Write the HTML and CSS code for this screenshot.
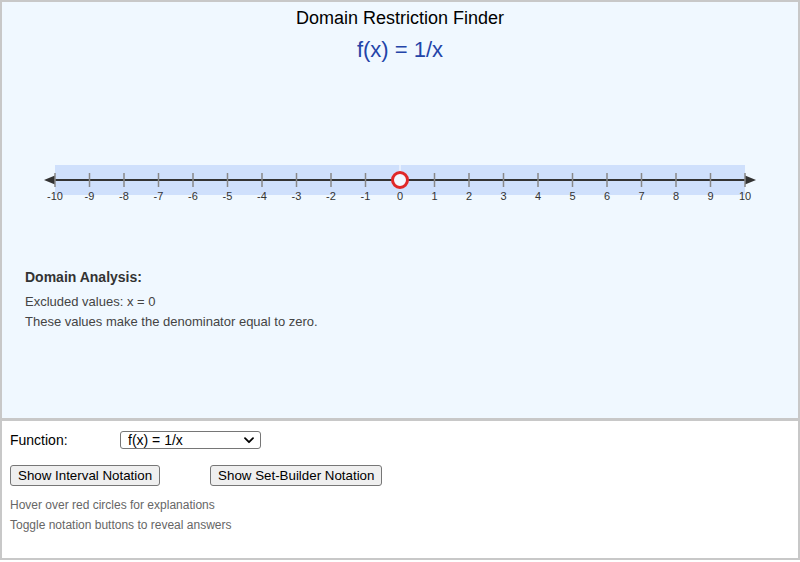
FILE: index.html
```html
<!DOCTYPE html>
<html>
<head>
<meta charset="utf-8">
<link rel="stylesheet" href="styles.css">
</head>
<body>
<div class="app">
  <div class="viz">
    <div class="title">Domain Restriction Finder</div>
    <div class="func">f(x) = 1/x</div>
    <svg class="line" width="796" height="140" viewBox="2 80 796 140">
      <rect x="55" y="165" width="345" height="30" fill="#cfe0fc"/>
      <rect x="400" y="165" width="345" height="30" fill="#cfe0fc"/>
      <line x1="400" y1="165" x2="400" y2="173" stroke="#ffffff" stroke-width="1"/>
      <line x1="50" y1="180" x2="750" y2="180" stroke="#333" stroke-width="2"/>
      <polygon points="44,180 55,175.5 55,184.5" fill="#333"/>
      <polygon points="756,180 745,175.5 745,184.5" fill="#333"/>
      <g stroke="#888" stroke-width="1.5">
        <line x1="55" y1="173" x2="55" y2="187"/>
        <line x1="89.5" y1="173" x2="89.5" y2="187"/>
        <line x1="124" y1="173" x2="124" y2="187"/>
        <line x1="158.5" y1="173" x2="158.5" y2="187"/>
        <line x1="193" y1="173" x2="193" y2="187"/>
        <line x1="227.5" y1="173" x2="227.5" y2="187"/>
        <line x1="262" y1="173" x2="262" y2="187"/>
        <line x1="296.5" y1="173" x2="296.5" y2="187"/>
        <line x1="331" y1="173" x2="331" y2="187"/>
        <line x1="365.5" y1="173" x2="365.5" y2="187"/>
        <line x1="434.5" y1="173" x2="434.5" y2="187"/>
        <line x1="469" y1="173" x2="469" y2="187"/>
        <line x1="503.5" y1="173" x2="503.5" y2="187"/>
        <line x1="538" y1="173" x2="538" y2="187"/>
        <line x1="572.5" y1="173" x2="572.5" y2="187"/>
        <line x1="607" y1="173" x2="607" y2="187"/>
        <line x1="641.5" y1="173" x2="641.5" y2="187"/>
        <line x1="676" y1="173" x2="676" y2="187"/>
        <line x1="710.5" y1="173" x2="710.5" y2="187"/>
        <line x1="745" y1="173" x2="745" y2="187"/>
      </g>
      <g class="lbl" text-anchor="middle" fill="#333333">
        <text x="55" y="200">-10</text>
        <text x="89.5" y="200">-9</text>
        <text x="124" y="200">-8</text>
        <text x="158.5" y="200">-7</text>
        <text x="193" y="200">-6</text>
        <text x="227.5" y="200">-5</text>
        <text x="262" y="200">-4</text>
        <text x="296.5" y="200">-3</text>
        <text x="331" y="200">-2</text>
        <text x="365.5" y="200">-1</text>
        <text x="400" y="200">0</text>
        <text x="434.5" y="200">1</text>
        <text x="469" y="200">2</text>
        <text x="503.5" y="200">3</text>
        <text x="538" y="200">4</text>
        <text x="572.5" y="200">5</text>
        <text x="607" y="200">6</text>
        <text x="641.5" y="200">7</text>
        <text x="676" y="200">8</text>
        <text x="710.5" y="200">9</text>
        <text x="745" y="200">10</text>
      </g>
      <circle cx="400" cy="180" r="7.5" fill="#f4f9ff" stroke="#e02828" stroke-width="3"/>
    </svg>
    <div class="analysis">
      <div class="a-head">Domain Analysis:</div>
      <div class="a-line">Excluded values: x = 0</div>
      <div class="a-line">These values make the denominator equal to zero.</div>
    </div>
  </div>
  <div class="controls">
    <div class="row">
      <span class="label">Function:</span>
      <span class="sel-wrap">
        <select class="sel">
          <option>f(x) = 1/x</option>
        </select>
        <svg class="chev" width="10" height="7" viewBox="0 0 10 7"><path d="M1 1.2 L5 5.2 L9 1.2" fill="none" stroke="#000" stroke-width="1.8" stroke-linecap="round" stroke-linejoin="round"/></svg>
      </span>
    </div>
    <div class="btns">
      <button class="btn">Show Interval Notation</button>
      <button class="btn">Show Set-Builder Notation</button>
    </div>
    <div class="help">Hover over red circles for explanations</div>
    <div class="help">Toggle notation buttons to reveal answers</div>
  </div>
</div>
</body>
</html>
```
FILE: styles.css
```css
* { box-sizing: border-box; }
html, body { margin: 0; padding: 0; background: #ffffff; }
body { font-family: "Liberation Sans", Arial, sans-serif; }
.app { width: 800px; height: 560px; display: flex; flex-direction: column; }
.viz {
  height: 420px;
  border: 2px solid #c8c8c8;
  background: #f0f8ff;
  display: flex;
  flex-direction: column;
}
.title {
  margin-top: 6px;
  text-align: center;
  font-size: 18px;
  line-height: 20px;
  color: #000;
}
.func {
  margin-top: 10px;
  text-align: center;
  font-size: 22px;
  line-height: 24px;
  color: #2344a8;
}
.line { display: block; margin-top: 18px; }
.lbl { font-family: "Liberation Sans", Arial, sans-serif; font-size: 11px; }
.analysis { padding-left: 23px; margin-top: 48px; color: #444; }
.a-head { font-size: 14px; line-height: 18px; font-weight: bold; color: #333; margin-bottom: 6px; }
.a-line { font-size: 13px; line-height: 20px; }
.controls {
  flex: 1;
  border: 2px solid #c8c8c8;
  border-top-width: 1px;
  padding: 10px 8px 0 8px;
  background: #fff;
}
.row { display: flex; align-items: center; height: 18px; }
.label { width: 110px; font-size: 14px; color: #000; }
.sel-wrap { position: relative; display: inline-block; }
.sel {
  appearance: none;
  -webkit-appearance: none;
  width: 141px;
  height: 18px;
  border: 1px solid #767676;
  border-radius: 3px;
  background: #fff;
  font-family: "Liberation Sans", Arial, sans-serif;
  font-size: 14px;
  line-height: 16px;
  color: #000;
  padding: 0 0 0 7px;
  display: block;
}
.chev { position: absolute; right: 7px; top: 6px; }
.btns { display: flex; gap: 50px; margin-top: 16px; }
.btn {
  height: 21px;
  padding: 0 7px;
  border: 1px solid #767676;
  border-radius: 3px;
  background: #efefef;
  font-family: "Liberation Sans", Arial, sans-serif;
  font-size: 13.333px;
  color: #000;
}
.help { font-size: 12px; line-height: 20px; color: #666; }
.btns + .help { margin-top: 9px; }
```
